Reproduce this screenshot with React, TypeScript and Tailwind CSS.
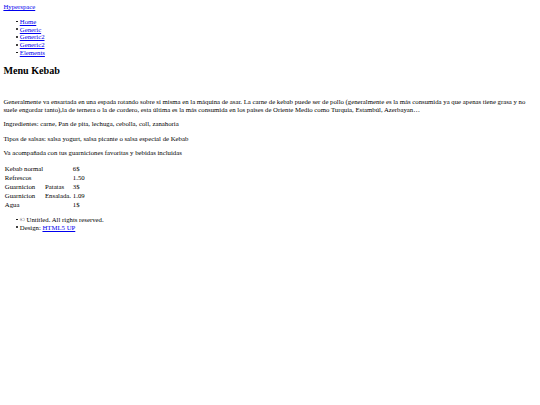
const navItems = ['Home', 'Generic', 'Generic2', 'Generic2', 'Elements'];

const menu: [string, string, string][] = [
  ['Kebab normal', '', '6$'],
  ['Refrescos', '', '1.50'],
  ['Guarnicion', 'Patatas', '3$'],
  ['Guarnicion', 'Ensalada.', '1.09'],
  ['Agua', '', '1$'],
];

function Bullet() {
  return <span className="mr-[2px] inline-block h-[1.7px] w-[1.7px] rounded-full bg-black align-[1.6px]" />;
}

export default function App() {
  return (
    <div className="min-h-[405px] bg-white p-[3.4px] text-black font-['Liberation_Serif',serif] text-[6.75px] leading-[1.15]">
      {/* Header */}
      <header>
        <a href="#" className="text-[#0000ee] underline">Hyperspace</a>
        <nav>
          <ul className="my-[6.75px] pl-[12.7px] list-none">
            {navItems.map((item, i) => (
              <li key={i}>
                <Bullet />
                <a href="#" className="text-[#0000ee] underline">{item}</a>
              </li>
            ))}
          </ul>
        </nav>
      </header>

      {/* Main */}
      <section>
        <h2 className="my-[8.4px] text-[10.125px] font-bold leading-[1.15]">Menu Kebab</h2>
        <div className="h-[6px]" />
        <p className="my-[6.75px]">
          Generalmente va ensartada en una espada rotando sobre sí misma en la máquina de asar. La carne de kebab puede ser de pollo (generalmente es la más consumida ya que apenas tiene grasa y no suele engordar tanto),la de ternera o la de cordero, esta última es la más consumida en los países de Oriente Medio como Turquía, Estambúl, Azerbayan…
        </p>
        <p className="my-[6.75px]">Ingredientes: carne, Pan de pita, lechuga, cebolla, coll, zanahoria</p>
        <p className="my-[6.75px]">Tipos de salsas: salsa yogurt, salsa picante o salsa especial de Kebab</p>
        <p className="my-[6.75px]">Va acompañada con tus guarniciones favoritas y bebidas incluidas</p>
        <table className="border-separate border-spacing-x-[1.5px] border-spacing-y-0">
          <tbody>
            {menu.map((row, i) => (
              <tr key={i}>
                {row.map((cell, j) => (
                  <td key={j} className="px-[0.4px] py-0 text-left leading-[9.1px]">{cell}</td>
                ))}
              </tr>
            ))}
          </tbody>
        </table>
      </section>

      {/* Footer */}
      <footer>
        <ul className="my-[6.75px] pl-[12.7px] list-none">
          <li>
            <Bullet />© Untitled. All rights reserved.
          </li>
          <li>
            <Bullet />Design: <a href="#" className="text-[#0000ee] underline">HTML5 UP</a>
          </li>
        </ul>
      </footer>
    </div>
  );
}
